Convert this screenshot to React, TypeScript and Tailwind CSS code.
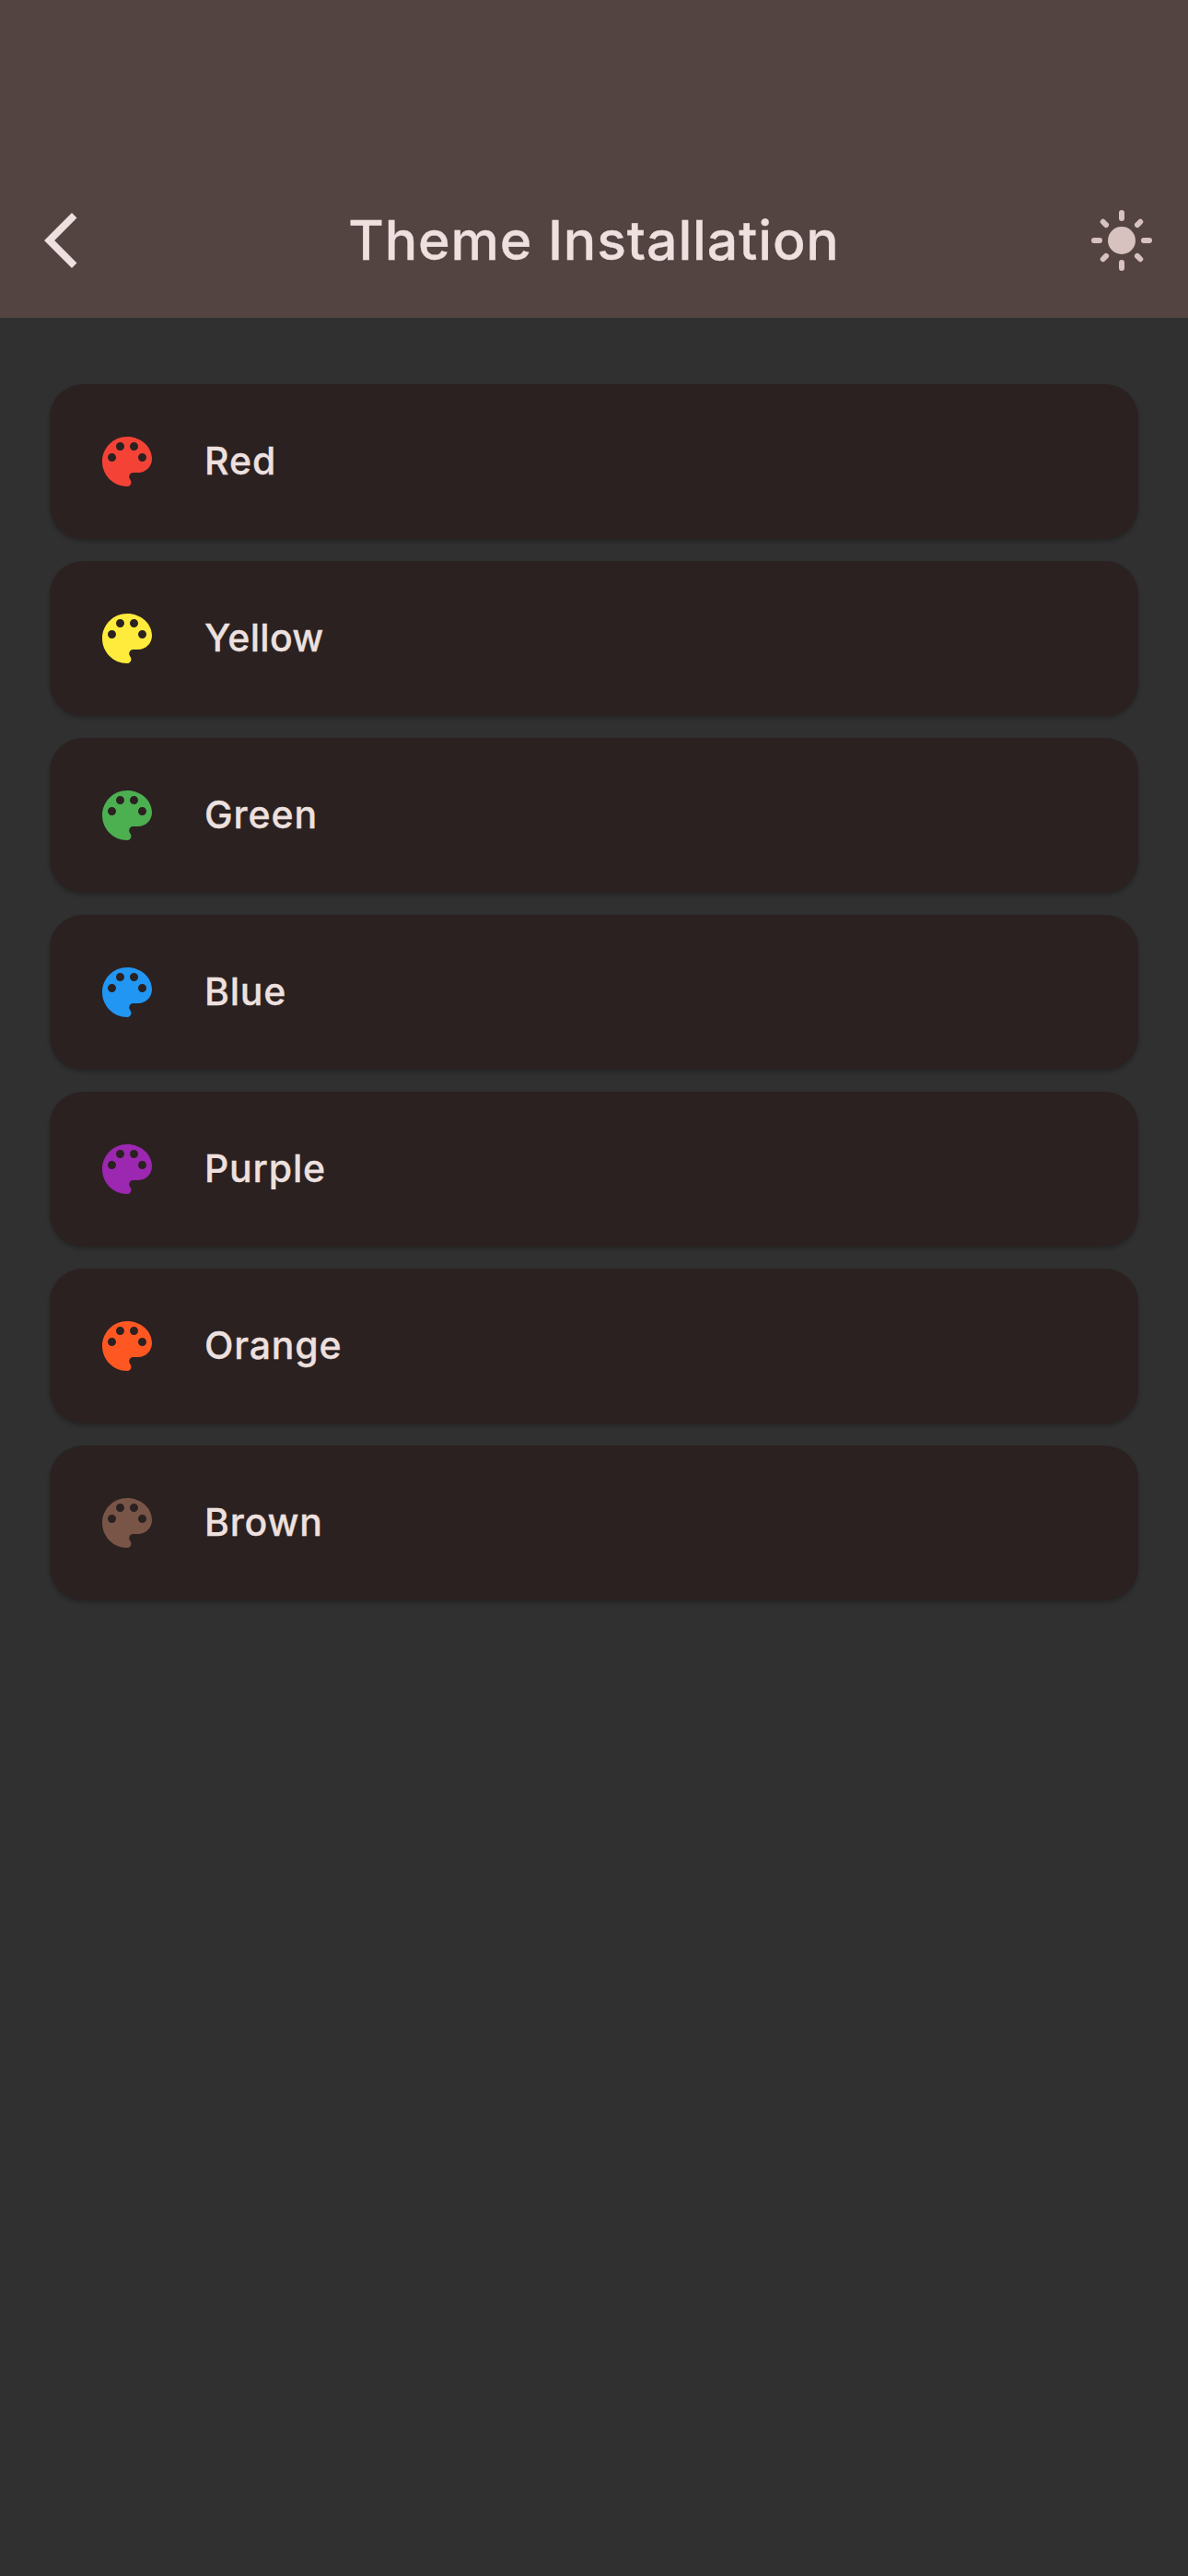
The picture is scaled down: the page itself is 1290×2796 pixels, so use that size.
const themes = [
  { name: "Red", color: "text-[#f44336]", tracking: "tracking-[0.9px]" },
  { name: "Yellow", color: "text-[#ffeb3b]", tracking: "tracking-[0.3px]" },
  { name: "Green", color: "text-[#4caf50]", tracking: "tracking-[0.9px]" },
  { name: "Blue", color: "text-[#2196f3]", tracking: "tracking-[0.8px]" },
  { name: "Purple", color: "text-[#9c27b0]", tracking: "tracking-[0.8px]" },
  { name: "Orange", color: "text-[#ff5722]", tracking: "tracking-[0.8px]" },
  { name: "Brown", color: "text-[#795548]", tracking: "tracking-[0.8px]" },
];

function BackIcon({ className }: { className: string }) {
  return (
    <svg viewBox="0 0 24 24" fill="currentColor" className={className}>
      <path d="M17.83 3.83 16 2 6 12l10 10 1.83-1.83L9.72 12z" />
    </svg>
  );
}

function PaletteIcon({ className }: { className: string }) {
  return (
    <svg viewBox="0 0 24 24" fill="currentColor" className={className}>
      <path d="M12 3c-4.97 0-9 4.03-9 9s4.03 9 9 9c.83 0 1.5-.67 1.5-1.5 0-.39-.15-.74-.39-1.01-.23-.26-.38-.61-.38-.99 0-.83.67-1.5 1.5-1.5H16c2.76 0 5-2.24 5-5 0-4.42-4.03-8-9-8zm-5.5 9c-.83 0-1.5-.67-1.5-1.5S5.67 9 6.5 9 8 9.67 8 10.5 7.33 12 6.5 12zm3-4C8.67 8 8 7.33 8 6.5S8.67 5 9.5 5s1.5.67 1.5 1.5S10.33 8 9.5 8zm5 0c-.83 0-1.5-.67-1.5-1.5S13.67 5 14.5 5s1.5.67 1.5 1.5S15.33 8 14.5 8zm3 4c-.83 0-1.5-.67-1.5-1.5S16.67 9 17.5 9s1.5.67 1.5 1.5-.67 1.5-1.5 1.5z" />
    </svg>
  );
}

function SunIcon({ className }: { className: string }) {
  return (
    <svg viewBox="0 0 24 24" stroke="currentColor" strokeWidth="2" strokeLinecap="round" className={className}>
      <circle cx="12" cy="12" r="5" fill="currentColor" stroke="none" />
      <path d="M12 2v2M12 20v2M2 12h2M20 12h2M5.25 5.25l1.1 1.1M17.65 17.65l1.1 1.1M18.75 5.25l-1.1 1.1M6.35 17.65l-1.1 1.1" />
    </svg>
  );
}

export default function App() {
  return (
    <div className="flex h-[2796px] w-[1290px] flex-col bg-[#303030] font-['Inter',sans-serif] font-medium text-[#ede0df] [-webkit-text-stroke:0.3px_#ede0df]">
      <header className="grid h-[345px] grid-cols-[144px_1fr_144px] items-end bg-[#534341]">
        <button aria-label="Back" className="flex h-[168px] items-center pl-[30px]">
          <BackIcon className="size-[72px]" />
        </button>
        <h1 className="flex h-[168px] items-center justify-center pb-px text-[59px] leading-[71px] tracking-[0.86px]">Theme Installation</h1>
        <button aria-label="Toggle brightness" className="flex h-[168px] items-center justify-center text-[#d8c2bf]">
          <SunIcon className="size-[72px] fill-none" />
        </button>
      </header>
      <main className="flex flex-col gap-6 px-[54px] pt-[72px]">
        {themes.map((t) => (
          <div key={t.name} className="flex h-[168px] items-center rounded-[36px] bg-[#2b2121] pl-12 shadow-[0_3px_4px_rgba(0,0,0,0.22)]">
            <PaletteIcon className={`size-[72px] ${t.color}`} />
            <span className={`ml-12 pb-[2px] text-[41px] leading-[50px] ${t.tracking}`}>{t.name}</span>
          </div>
        ))}
      </main>
    </div>
  );
}
